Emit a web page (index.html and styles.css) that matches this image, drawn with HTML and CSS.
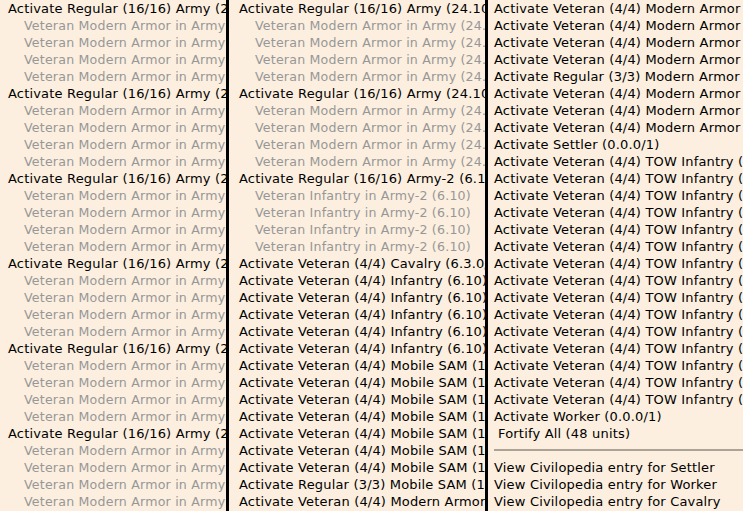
FILE: index.html
```html
<!DOCTYPE html>
<html>
<head>
<meta charset="utf-8">
<link rel="stylesheet" href="styles.css">
</head>
<body>
<div class="screen">
  <div class="menu col1">
    <div class="item">Activate Regular (16/16) Army (24.10)</div>
    <div class="item sub">Veteran Modern Armor in Army (24.10)</div>
    <div class="item sub">Veteran Modern Armor in Army (24.10)</div>
    <div class="item sub">Veteran Modern Armor in Army (24.10)</div>
    <div class="item sub">Veteran Modern Armor in Army (24.10)</div>
    <div class="item">Activate Regular (16/16) Army (24.10)</div>
    <div class="item sub">Veteran Modern Armor in Army (24.10)</div>
    <div class="item sub">Veteran Modern Armor in Army (24.10)</div>
    <div class="item sub">Veteran Modern Armor in Army (24.10)</div>
    <div class="item sub">Veteran Modern Armor in Army (24.10)</div>
    <div class="item">Activate Regular (16/16) Army (24.10)</div>
    <div class="item sub">Veteran Modern Armor in Army (24.10)</div>
    <div class="item sub">Veteran Modern Armor in Army (24.10)</div>
    <div class="item sub">Veteran Modern Armor in Army (24.10)</div>
    <div class="item sub">Veteran Modern Armor in Army (24.10)</div>
    <div class="item">Activate Regular (16/16) Army (24.10)</div>
    <div class="item sub">Veteran Modern Armor in Army (24.10)</div>
    <div class="item sub">Veteran Modern Armor in Army (24.10)</div>
    <div class="item sub">Veteran Modern Armor in Army (24.10)</div>
    <div class="item sub">Veteran Modern Armor in Army (24.10)</div>
    <div class="item">Activate Regular (16/16) Army (24.10)</div>
    <div class="item sub">Veteran Modern Armor in Army (24.10)</div>
    <div class="item sub">Veteran Modern Armor in Army (24.10)</div>
    <div class="item sub">Veteran Modern Armor in Army (24.10)</div>
    <div class="item sub">Veteran Modern Armor in Army (24.10)</div>
    <div class="item">Activate Regular (16/16) Army (24.10)</div>
    <div class="item sub">Veteran Modern Armor in Army (24.10)</div>
    <div class="item sub">Veteran Modern Armor in Army (24.10)</div>
    <div class="item sub">Veteran Modern Armor in Army (24.10)</div>
    <div class="item sub">Veteran Modern Armor in Army (24.10)</div>
    <div class="item">Activate Regular (16/16) Army (24.10)</div>
  </div>
  <div class="menu col2">
    <div class="item">Activate Regular (16/16) Army (24.10)</div>
    <div class="item sub">Veteran Modern Armor in Army (24.10)</div>
    <div class="item sub">Veteran Modern Armor in Army (24.10)</div>
    <div class="item sub">Veteran Modern Armor in Army (24.10)</div>
    <div class="item sub">Veteran Modern Armor in Army (24.10)</div>
    <div class="item">Activate Regular (16/16) Army (24.10)</div>
    <div class="item sub">Veteran Modern Armor in Army (24.10)</div>
    <div class="item sub">Veteran Modern Armor in Army (24.10)</div>
    <div class="item sub">Veteran Modern Armor in Army (24.10)</div>
    <div class="item sub">Veteran Modern Armor in Army (24.10)</div>
    <div class="item">Activate Regular (16/16) Army-2 (6.10)</div>
    <div class="item sub">Veteran Infantry in Army-2 (6.10)</div>
    <div class="item sub">Veteran Infantry in Army-2 (6.10)</div>
    <div class="item sub">Veteran Infantry in Army-2 (6.10)</div>
    <div class="item sub">Veteran Infantry in Army-2 (6.10)</div>
    <div class="item">Activate Veteran (4/4) Cavalry (6.3.0/1)</div>
    <div class="item">Activate Veteran (4/4) Infantry (6.10)</div>
    <div class="item">Activate Veteran (4/4) Infantry (6.10)</div>
    <div class="item">Activate Veteran (4/4) Infantry (6.10)</div>
    <div class="item">Activate Veteran (4/4) Infantry (6.10)</div>
    <div class="item">Activate Veteran (4/4) Infantry (6.10)</div>
    <div class="item">Activate Veteran (4/4) Mobile SAM (1.10)</div>
    <div class="item">Activate Veteran (4/4) Mobile SAM (1.10)</div>
    <div class="item">Activate Veteran (4/4) Mobile SAM (1.10)</div>
    <div class="item">Activate Veteran (4/4) Mobile SAM (1.10)</div>
    <div class="item">Activate Veteran (4/4) Mobile SAM (1.10)</div>
    <div class="item">Activate Veteran (4/4) Mobile SAM (1.10)</div>
    <div class="item">Activate Veteran (4/4) Mobile SAM (1.10)</div>
    <div class="item">Activate Regular (3/3) Mobile SAM (1.10)</div>
    <div class="item">Activate Veteran (4/4) Modern Armor (24.10)</div>
    <div class="item">Activate Veteran (4/4) Modern Armor (24.10)</div>
  </div>
  <div class="menu col3">
    <div class="item">Activate Veteran (4/4) Modern Armor (24.10)</div>
    <div class="item">Activate Veteran (4/4) Modern Armor (24.10)</div>
    <div class="item">Activate Veteran (4/4) Modern Armor (24.10)</div>
    <div class="item">Activate Veteran (4/4) Modern Armor (24.10)</div>
    <div class="item">Activate Regular (3/3) Modern Armor (24.10)</div>
    <div class="item">Activate Veteran (4/4) Modern Armor (24.10)</div>
    <div class="item">Activate Veteran (4/4) Modern Armor (24.10)</div>
    <div class="item">Activate Veteran (4/4) Modern Armor (24.10)</div>
    <div class="item">Activate Settler (0.0.0/1)</div>
    <div class="item">Activate Veteran (4/4) TOW Infantry (1.10)</div>
    <div class="item">Activate Veteran (4/4) TOW Infantry (1.10)</div>
    <div class="item">Activate Veteran (4/4) TOW Infantry (1.10)</div>
    <div class="item">Activate Veteran (4/4) TOW Infantry (1.10)</div>
    <div class="item">Activate Veteran (4/4) TOW Infantry (1.10)</div>
    <div class="item">Activate Veteran (4/4) TOW Infantry (1.10)</div>
    <div class="item">Activate Veteran (4/4) TOW Infantry (1.10)</div>
    <div class="item">Activate Veteran (4/4) TOW Infantry (1.10)</div>
    <div class="item">Activate Veteran (4/4) TOW Infantry (1.10)</div>
    <div class="item">Activate Veteran (4/4) TOW Infantry (1.10)</div>
    <div class="item">Activate Veteran (4/4) TOW Infantry (1.10)</div>
    <div class="item">Activate Veteran (4/4) TOW Infantry (1.10)</div>
    <div class="item">Activate Veteran (4/4) TOW Infantry (1.10)</div>
    <div class="item">Activate Veteran (4/4) TOW Infantry (1.10)</div>
    <div class="item">Activate Veteran (4/4) TOW Infantry (1.10)</div>
    <div class="item">Activate Worker (0.0.0/1)</div>
    <div class="item fortify">Fortify All (48 units)</div>
    <div class="sep"></div>
    <div class="item">View Civilopedia entry for Settler</div>
    <div class="item">View Civilopedia entry for Worker</div>
    <div class="item">View Civilopedia entry for Cavalry</div>
  </div>
</div>
</body>
</html>
```

FILE: styles.css
```css
html, body {
  margin: 0;
  padding: 0;
  background: #fcefdf;
}
.screen {
  display: flex;
  width: 743px;
  height: 511px;
  overflow: hidden;
  background: #fcefdf;
  font-family: "DejaVu Sans", Verdana, sans-serif;
  font-size: 13px;
  line-height: 17px;
  letter-spacing: 0.18px;
  color: #000;
}
.menu {
  flex: none;
  overflow: hidden;
  box-sizing: border-box;
}
.col1 {
  width: 226px;
  padding-left: 8px;
}
.col2 {
  width: 259px;
  border-left: 3px solid #000;
  padding-left: 10px;
}
.col3 {
  flex: 1;
  min-width: 0;
  border-left: 3px solid #000;
  padding-left: 6px;
}
.item {
  height: 17px;
  white-space: nowrap;
}
.sub {
  padding-left: 16px;
  font-size: 12.6px;
  letter-spacing: 0.2px;
  color: #979797;
}
.fortify {
  padding-left: 4px;
}
.sep {
  height: 17px;
  display: flex;
  align-items: center;
  margin-top: -1px;
  margin-bottom: 1px;
}
.sep::before {
  content: "";
  display: block;
  width: 100%;
  height: 2px;
  background: #aca295;
}
```
